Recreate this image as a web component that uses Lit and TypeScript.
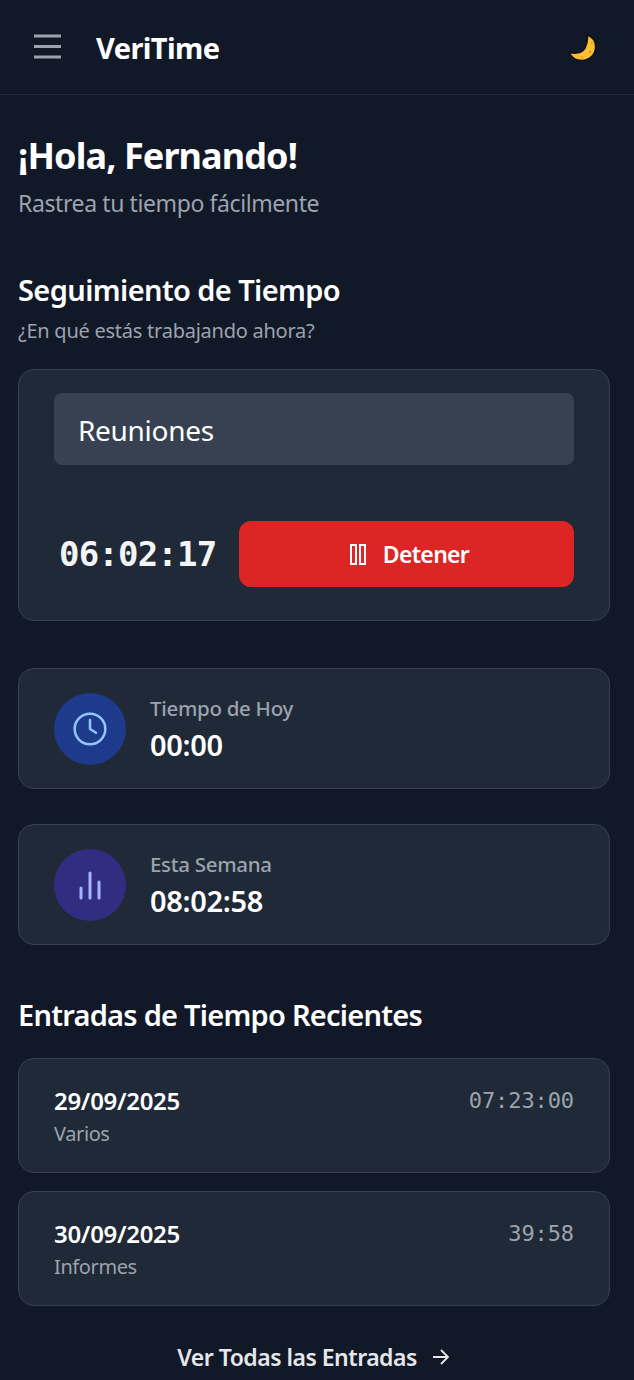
import { LitElement, html, css } from 'lit';
import { customElement } from 'lit/decorators.js';

const entries = [
  { date: '29/09/2025', label: 'Varios', time: '07:23:00' },
  { date: '30/09/2025', label: 'Informes', time: '39:58' },
];

@customElement('app-root')
export class AppRoot extends LitElement {
  static styles = css`
    :host {
      display: block;
      height: 1380px;
      overflow: hidden;
      background: #111827;
      color: #ffffff;
      font-family: 'Noto Sans', 'Open Sans', sans-serif;
    }
    .header {
      display: flex;
      align-items: center;
      height: 94px;
      padding: 0 38px 0 32px;
      border-bottom: 1px solid #1f2937;
    }
    .menu {
      display: block;
      color: #9ca3af;
    }
    .brand {
      margin-left: 32px;
      font-size: 29px;
      font-weight: 700;
      letter-spacing: -0.6px;
      flex: 1;
    }
    .main {
      display: flex;
      flex-direction: column;
      padding: 0 24px 0 18px;
    }
    h1 {
      margin: 39px 0 0;
      font-size: 36px;
      line-height: 44px;
      font-weight: 700;
      letter-spacing: -0.9px;
    }
    .tagline {
      margin: 9px 0 0;
      font-size: 23px;
      line-height: 32px;
      color: #9ca3af;
      letter-spacing: -0.4px;
    }
    h2 {
      margin: 0;
      font-size: 29px;
      line-height: 36px;
      font-weight: 600;
      letter-spacing: -0.6px;
    }
    .tracking {
      margin-top: 53px;
    }
    .hint {
      margin: 9px 0 0;
      font-size: 20px;
      line-height: 28px;
      color: #9ca3af;
      letter-spacing: -0.25px;
    }
    .card {
      background: #1f2937;
      border: 1px solid #374151;
      border-radius: 16px;
      box-sizing: border-box;
    }
    .timer {
      margin-top: 24px;
      height: 252px;
      padding: 23px 35px 0;
    }
    .task {
      display: flex;
      align-items: center;
      height: 72px;
      padding: 2px 24px 0;
      box-sizing: border-box;
      background: #374151;
      border-radius: 8px;
      font-size: 28px;
      letter-spacing: -0.3px;
    }
    .controls {
      display: flex;
      align-items: center;
      margin-top: 56px;
    }
    .clock {
      width: 185px;
      padding-left: 5px;
      box-sizing: border-box;
      font-family: 'DejaVu Sans Mono', monospace;
      font-size: 34px;
      font-weight: 700;
      color: #f3f4f6;
      letter-spacing: -0.8px;
    }
    .stop {
      display: flex;
      align-items: center;
      justify-content: center;
      gap: 15px;
      flex: 1;
      height: 66px;
      background: #dc2626;
      border-radius: 12px;
      font-size: 23px;
      font-weight: 600;
      letter-spacing: -0.7px;
    }
    .stat {
      display: flex;
      align-items: center;
      gap: 24px;
      height: 121px;
      padding: 0 35px;
    }
    .stat.first {
      margin-top: 47px;
    }
    .stat.second {
      margin-top: 35px;
    }
    .icon {
      display: flex;
      align-items: center;
      justify-content: center;
      width: 72px;
      height: 72px;
      border-radius: 50%;
    }
    .icon.blue {
      background: #1e3a8a;
      color: #93c5fd;
    }
    .icon.indigo {
      background: #312e81;
      color: #a5b4fc;
    }
    .stat-label {
      font-size: 20.5px;
      line-height: 28px;
      font-weight: 500;
      color: #9ca3af;
      letter-spacing: -0.3px;
    }
    .stat-value {
      margin-top: 5px;
      font-size: 29px;
      line-height: 36px;
      font-weight: 600;
      letter-spacing: -0.3px;
    }
    .recent {
      margin-top: 52px;
      letter-spacing: -0.75px;
    }
    .recent + .entry {
      margin-top: 25px;
    }
    .entry {
      display: flex;
      justify-content: space-between;
      height: 115px;
      padding: 26px 35px 0;
      margin-top: 18px;
    }
    .entry-date {
      font-size: 24px;
      line-height: 32px;
      font-weight: 600;
      letter-spacing: -0.3px;
    }
    .entry-label {
      margin-top: 3px;
      font-size: 20px;
      line-height: 28px;
      color: #9ca3af;
      letter-spacing: -0.4px;
    }
    .entry-time {
      padding-top: 2px;
      font-family: 'DejaVu Sans Mono', monospace;
      font-size: 22px;
      line-height: 28px;
      color: #9ca3af;
      letter-spacing: -0.1px;
    }
    .all {
      display: flex;
      align-items: center;
      justify-content: center;
      gap: 14px;
      margin-top: 35px;
      font-size: 23px;
      line-height: 32px;
      font-weight: 600;
      color: #e5e7eb;
      letter-spacing: -0.5px;
    }
  `;

  render() {
    return html`
      <div class="header">
        <svg class="menu" width="32" height="32" viewBox="0 0 32 32" fill="none" stroke="currentColor" stroke-width="3">
          <path d="M2 5h27M2 15.500h27M2 26h27" />
        </svg>
        <div class="brand">VeriTime</div>
        <svg width="28" height="28" viewBox="0 0 28 28">
          <path d="M19 2C25 4 28 9 27.500 15 27 22 21 27.500 14 27.500 8 27.500 3 24 1 19 7 21.500 14 20 17 15 19 11 20 6 19 2Z" fill="#fcbe32" stroke="#111" stroke-width="1.500" />
          <circle cx="24" cy="10" r="1" fill="#d9921f" />
          <circle cx="22" cy="19" r="1.200" fill="#d9921f" />
          <circle cx="14" cy="24.500" r="1" fill="#d9921f" />
        </svg>
      </div>
      <div class="main">
        <h1>¡Hola, Fernando!</h1>
        <p class="tagline">Rastrea tu tiempo fácilmente</p>

        <h2 class="tracking">Seguimiento de Tiempo</h2>
        <p class="hint">¿En qué estás trabajando ahora?</p>
        <div class="card timer">
          <div class="task">Reuniones</div>
          <div class="controls">
            <div class="clock">06:02:17</div>
            <div class="stop">
              <svg width="24" height="24" viewBox="0 0 24 24" fill="none" stroke="currentColor" stroke-width="2">
                <rect x="7" y="3" width="5" height="19" />
                <rect x="16" y="3" width="5" height="19" />
              </svg>
              Detener
            </div>
          </div>
        </div>

        <div class="card stat first">
          <div class="icon blue">
            <svg width="36" height="36" viewBox="0 0 24 24" fill="none" stroke="currentColor" stroke-width="1.700" stroke-linecap="round" stroke-linejoin="round">
              <circle cx="12" cy="12" r="10.200" />
              <path d="M12 6v6l4 2.500" />
            </svg>
          </div>
          <div>
            <div class="stat-label">Tiempo de Hoy</div>
            <div class="stat-value">00:00</div>
          </div>
        </div>
        <div class="card stat second">
          <div class="icon indigo">
            <svg width="36" height="36" viewBox="0 0 36 36" fill="none" stroke="currentColor" stroke-width="3" stroke-linecap="round">
              <path d="M9 31V21M18 31V6M27 31V15" />
            </svg>
          </div>
          <div>
            <div class="stat-label">Esta Semana</div>
            <div class="stat-value">08:02:58</div>
          </div>
        </div>

        <h2 class="recent">Entradas de Tiempo Recientes</h2>
        ${entries.map(
          (e) => html`
            <div class="card entry">
              <div>
                <div class="entry-date">${e.date}</div>
                <div class="entry-label">${e.label}</div>
              </div>
              <div class="entry-time">${e.time}</div>
            </div>
          `
        )}
        <div class="all">
          Ver Todas las Entradas
          <svg width="20" height="20" viewBox="0 0 20 20" fill="none" stroke="currentColor" stroke-width="1.800">
            <path d="M2 10h15M10 3l7 7-7 7" />
          </svg>
        </div>
      </div>
    `;
  }
}
